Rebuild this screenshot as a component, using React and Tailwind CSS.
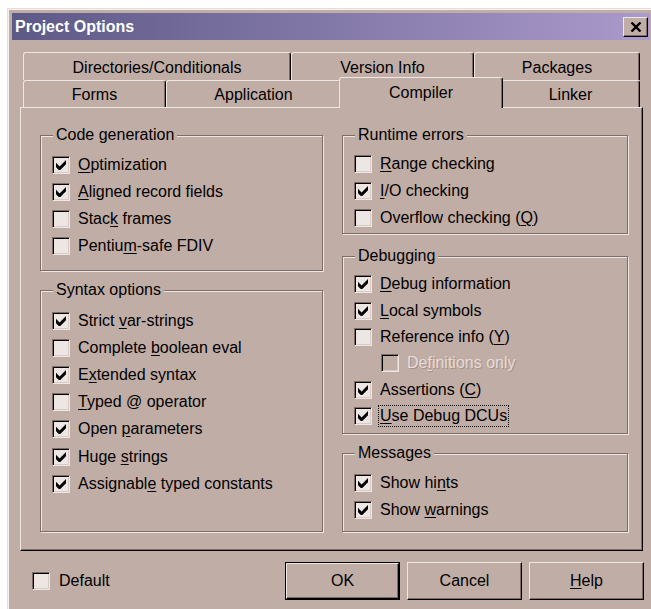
import React from 'react';

// Captions use Delphi-style "&" markers for the accelerator letter
const Caption = ({ text }) => {
    const i = text.indexOf('&');
    if (i < 0) return text;
    return (
        <>
            {text.slice(0, i)}
            <u className="underline-offset-2">{text[i + 1]}</u>
            {text.slice(i + 2)}
        </>
    );
};

const CheckBox = ({ checked, disabled }) => (
    <span
        className={`flex h-[18px] w-[18px] shrink-0 items-center justify-center border border-t-[#7e6d67] border-l-[#7e6d67] border-r-[#efe7e3] border-b-[#efe7e3] shadow-[inset_1px_1px_0_#000,inset_-1px_-1px_0_#d6cbc6] ${disabled ? 'bg-[#c0ada6]' : 'bg-[#ede6e2]'}`}
    >
        {checked && (
            <svg width="10" height="10" viewBox="0 0 7 7">
                <polygon points="0,2 2.5,4.5 7,0 7,3 3,7 2,7 0,5" fill="#000" />
            </svg>
        )}
    </span>
);

const Option = ({ caption, checked, disabled, focused, indent, rowClass }) => (
    <div className={`flex items-center gap-[8px] ${rowClass} ${indent ? 'pl-[27px]' : ''}`}>
        <CheckBox checked={checked} disabled={disabled} />
        {focused ? (
            <span className="-ml-[2px] border border-dotted border-black px-[1px] leading-[20px]">
                <Caption text={caption} />
            </span>
        ) : (
            <span className={disabled ? 'text-[#e6dcd8] [text-shadow:1px_1px_0_#a3918b]' : ''}>
                <Caption text={caption} />
            </span>
        )}
    </div>
);

const Group = ({ title, className, children }) => (
    <div className={`relative border border-[#7e6d67] pl-[11px] shadow-[inset_1px_1px_0_#efe7e3,1px_1px_0_#efe7e3] ${className}`}>
        <span className="absolute -top-[10px] left-[12px] bg-[#c0ada6] px-[3px] leading-[18px]">{title}</span>
        {children}
    </div>
);

const codeGeneration = [
    ['&Optimization', true],
    ['&Aligned record fields', true],
    ['Stac&k frames', false],
    ['Pentiu&m-safe FDIV', false],
];

const syntaxOptions = [
    ['Strict &var-strings', true],
    ['Complete &boolean eval', false],
    ['E&xtended syntax', true],
    ['&Typed @ operator', false],
    ['Open &parameters', true],
    ['Huge &strings', true],
    ['Assignabl&e typed constants', true],
];

const runtimeErrors = [
    ['&Range checking', false],
    ['&I/O checking', true],
    ['Overflow checking (&Q)', false],
];

const debugging = [
    { caption: '&Debug information', checked: true },
    { caption: '&Local symbols', checked: true },
    { caption: 'Reference info (&Y)', checked: false },
    { caption: 'De&finitions only', checked: false, disabled: true, indent: true },
    { caption: 'Assertions (&C)', checked: true },
    { caption: '&Use Debug DCUs', checked: true, focused: true },
];

const messages = [
    ['Show hi&nts', true],
    ['Show &warnings', true],
];

const backTabs = [
    ['Directories/Conditionals', 'w-[268px]'],
    ['Version Info', 'w-[183px]'],
    ['Packages', 'w-[166px]'],
];

const frontTabs = [
    ['Forms', 'w-[143px]'],
    ['Application', 'w-[175px]'],
    ['Compiler', 'w-[164px]', true],
    ['Linker', 'w-[139px]'],
];

const tabEdge =
    'flex justify-center rounded-t-[3px] border-t border-l border-r border-t-[#efe7e3] border-l-[#efe7e3] border-r-black bg-[#c0ada6] shadow-[inset_-1px_0_0_#7e6d67]';

const Button = ({ children, isDefault }) => (
    <div className={`h-[38px] w-[115px] ${isDefault ? 'border border-black' : ''}`}>
        <div className="flex h-full items-center justify-center border border-t-[#efe7e3] border-l-[#efe7e3] border-r-black border-b-black shadow-[inset_-1px_-1px_0_#7e6d67]">
            {children}
        </div>
    </div>
);

export default function App() {
    return (
        <div className="h-[609px] w-[651px] overflow-hidden bg-white font-['Liberation_Sans',Arial,sans-serif] text-[16px] text-black">
            <div className="ml-[7px] mt-[8px] w-[648px] border border-[#e6ddd9] bg-[#c0ada6] p-[4px] shadow-[inset_1px_1px_0_#f7f2f0]">
                {/* caption bar */}
                <div className="flex h-[27px] items-center justify-between bg-linear-to-r from-[#5d5987] to-[#ab9acb] pl-[3px] pr-[2px]">
                    <span className="font-bold text-white">Project Options</span>
                    <span className="flex h-[20px] w-[25px] items-center justify-center border border-t-[#efe7e3] border-l-[#efe7e3] border-r-black border-b-black bg-[#c0ada6] shadow-[inset_-1px_-1px_0_#7e6d67]">
                        <svg width="12" height="10" viewBox="0 0 12 10">
                            <path d="M1.5 0.5 L10.5 9.5 M10.5 0.5 L1.5 9.5" stroke="#000" strokeWidth="2.4" />
                        </svg>
                    </span>
                </div>

                {/* tab strip, two rows */}
                <div className="ml-[11px] mt-[12px] flex h-[28px]">
                    {backTabs.map(([label, w]) => (
                        <div key={label} className={`${tabEdge} ${w} items-center pt-[3px]`}>
                            {label}
                        </div>
                    ))}
                </div>
                <div className="ml-[11px] flex h-[27px] items-end">
                    {frontTabs.map(([label, w, active]) =>
                        active ? (
                            <div key={label} className={`${tabEdge} ${w} relative z-10 -mx-[2px] -mb-px h-[31px] items-center pb-[1px]`}>
                                {label}
                            </div>
                        ) : (
                            <div key={label} className={`${tabEdge} ${w} h-[27px] items-center pt-[2px]`}>
                                {label}
                            </div>
                        )
                    )}
                </div>

                {/* Compiler page */}
                <div className="ml-[8px] mr-[7px] flex h-[444px] gap-[19px] border border-t-[#efe7e3] border-l-[#efe7e3] border-r-black border-b-black pb-[18px] pl-[19px] pt-[27px] shadow-[inset_-1px_-1px_0_#7e6d67]">
                    <div className="flex w-[283px] flex-col">
                        <Group title="Code generation" className="pb-[11px] pt-[15px]">
                            {codeGeneration.map(([c, v]) => (
                                <Option key={c} caption={c} checked={v} rowClass="h-[27px]" />
                            ))}
                        </Group>
                        <Group title="Syntax options" className="mt-[19px] flex-1 pt-[16px]">
                            {syntaxOptions.map(([c, v]) => (
                                <Option key={c} caption={c} checked={v} rowClass="h-[27.2px]" />
                            ))}
                        </Group>
                    </div>

                    <div className="flex w-[286px] flex-col">
                        <Group title="Runtime errors" className="pb-[2px] pt-[14px]">
                            {runtimeErrors.map(([c, v]) => (
                                <Option key={c} caption={c} checked={v} rowClass="h-[27px]" />
                            ))}
                        </Group>
                        <Group title="Debugging" className="mt-[22px] pb-[4px] pt-[14px]">
                            {debugging.map((o) => (
                                <Option key={o.caption} {...o} rowClass="h-[26.4px]" />
                            ))}
                        </Group>
                        <Group title="Messages" className="mt-[19px] flex-1 pt-[15px]">
                            {messages.map(([c, v]) => (
                                <Option key={c} caption={c} checked={v} rowClass="h-[27px]" />
                            ))}
                        </Group>
                    </div>
                </div>

                {/* dialog buttons */}
                <div className="ml-[20px] mr-[6px] mt-[11px] flex items-center">
                    <div className="flex items-center gap-[9px]">
                        <CheckBox checked={false} />
                        <span>Default</span>
                    </div>
                    <div className="ml-auto flex gap-[7px]">
                        <Button isDefault>OK</Button>
                        <Button>Cancel</Button>
                        <Button>
                            <Caption text="&Help" />
                        </Button>
                    </div>
                </div>
                <div className="h-[20px]" />
            </div>
        </div>
    );
}
